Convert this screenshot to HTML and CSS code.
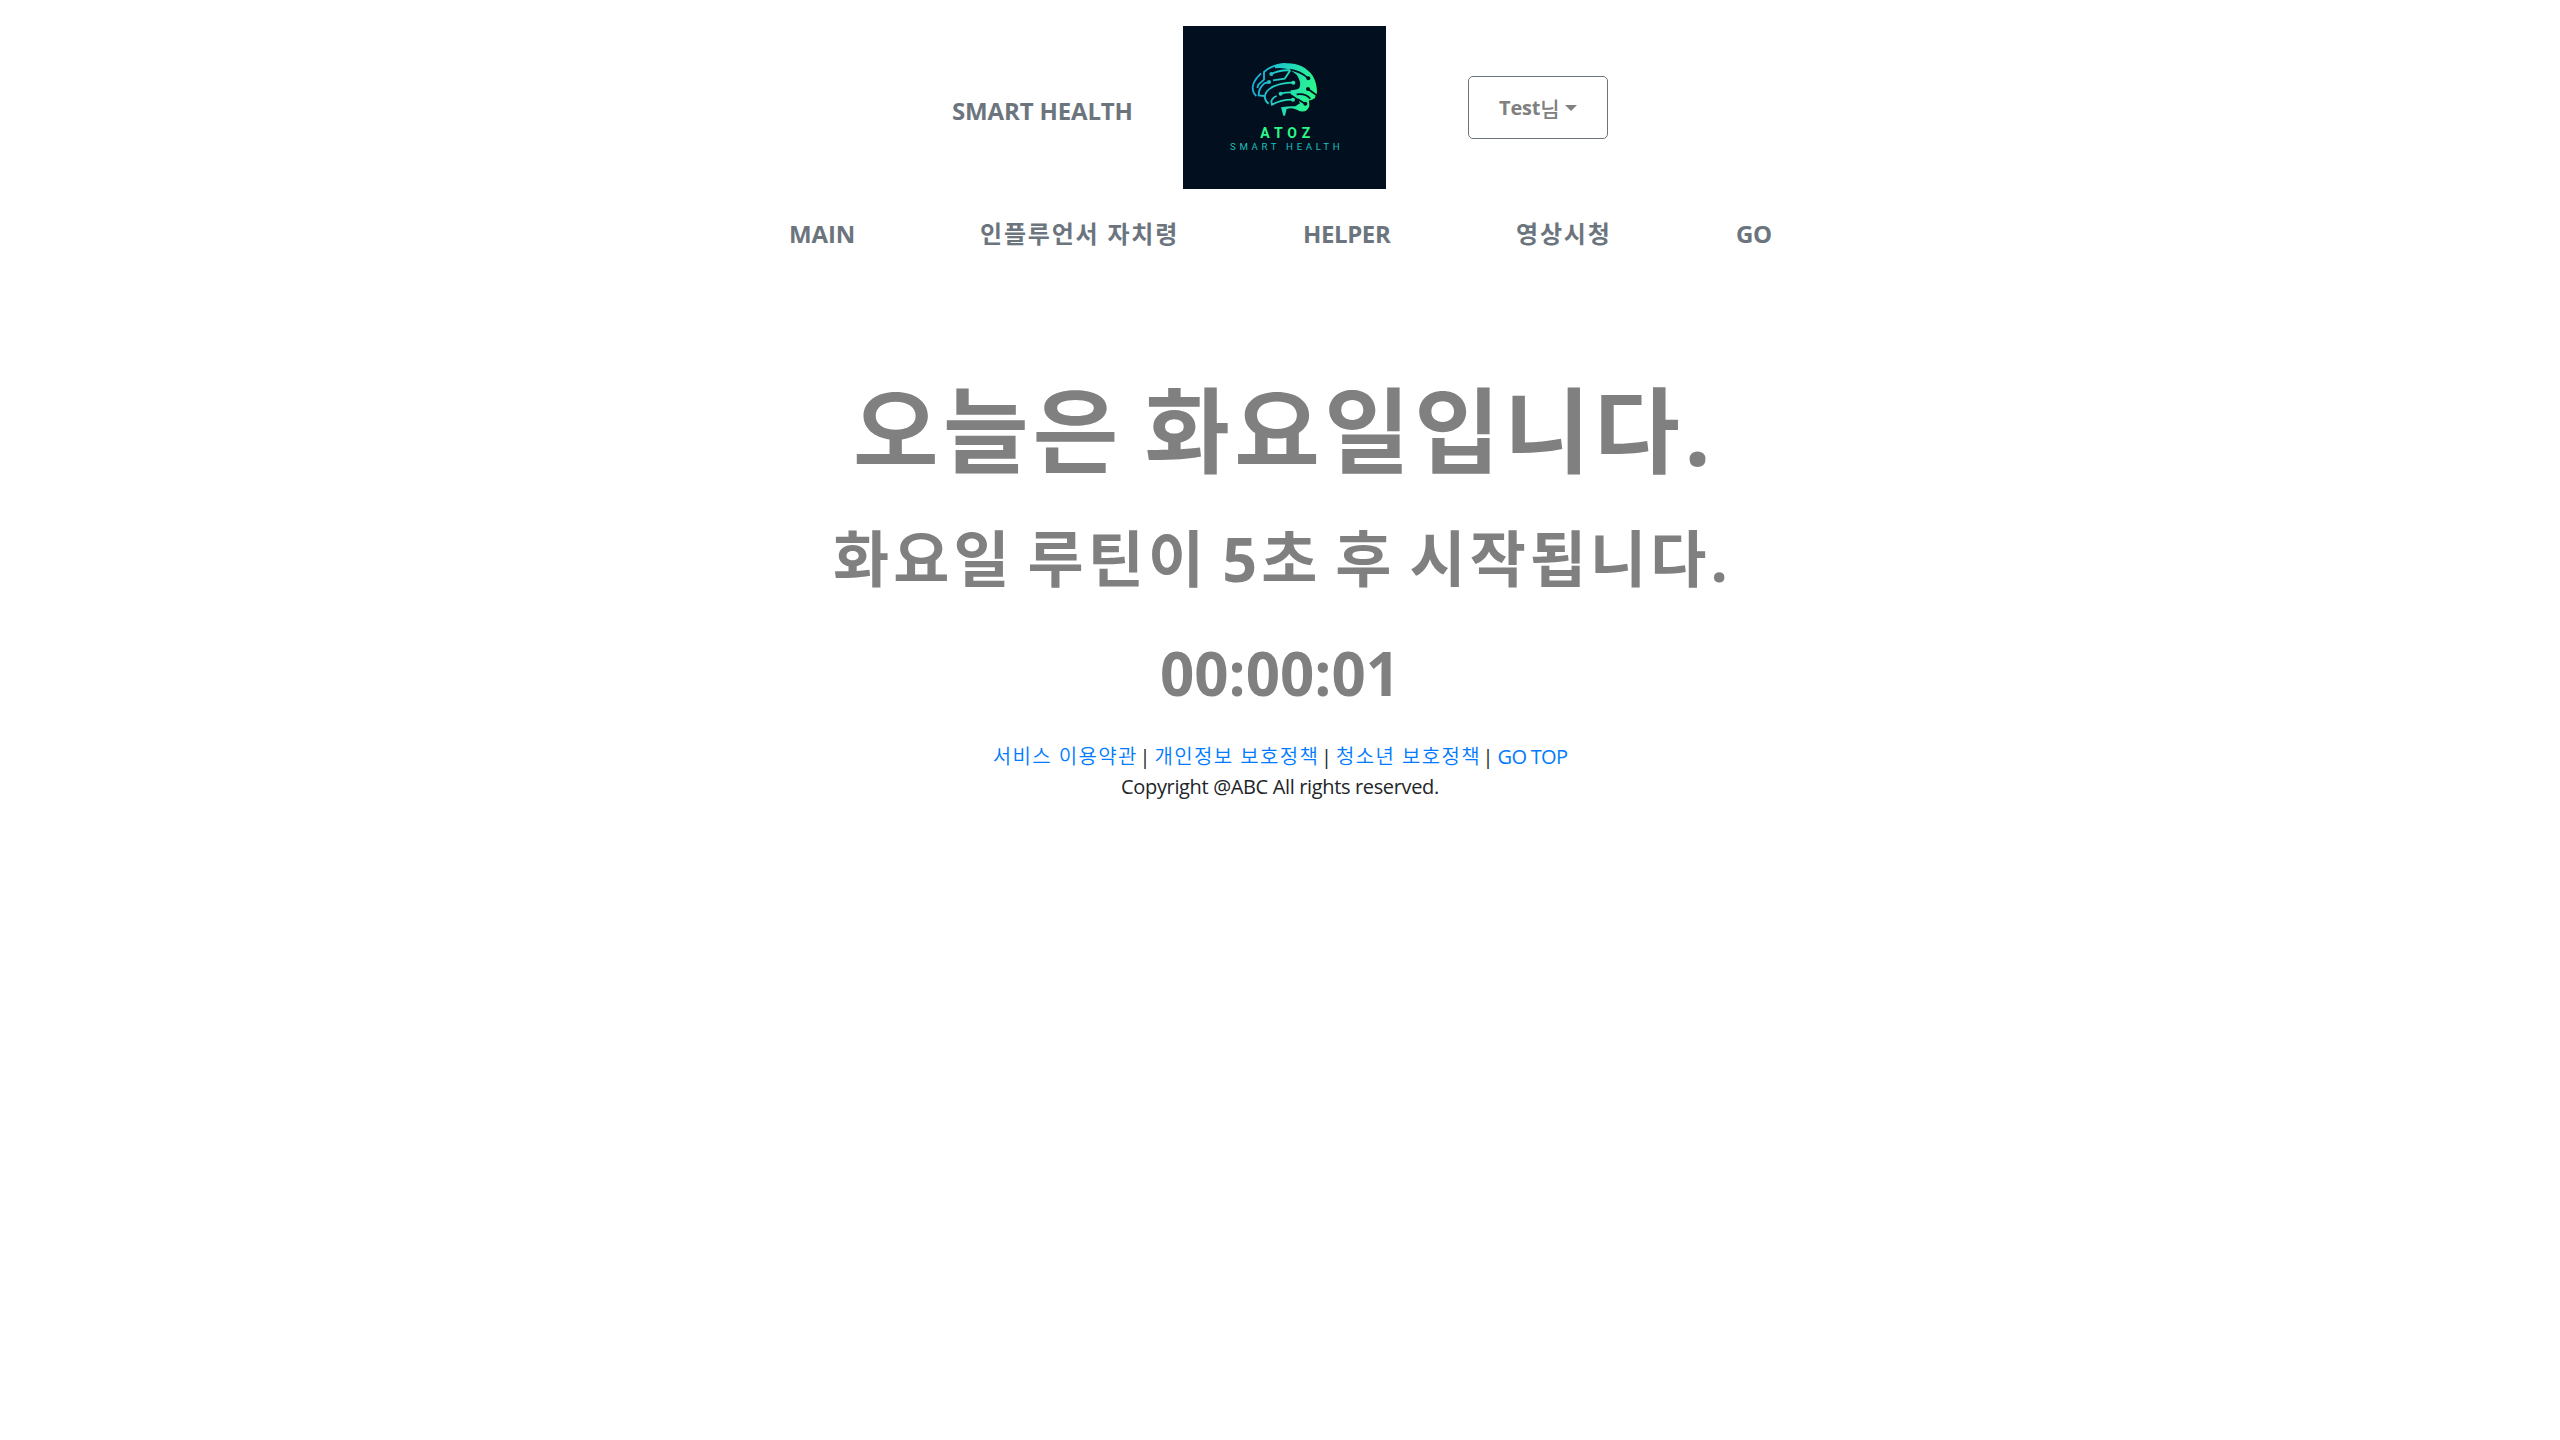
FILE: index.html
```html
<!DOCTYPE html>
<html lang="ko">
<head>
<meta charset="utf-8">
<title>Smart Health</title>
<link rel="stylesheet" href="styles.css">
</head>
<body>
<header class="header">
  <a class="brand"><span>SMART HEALTH</span></a>
  <svg class="logo" viewBox="9 18 609 489" role="img" aria-label="ATOZ Smart Health">
    <defs>
      <linearGradient id="brain" gradientUnits="userSpaceOnUse" x1="217" y1="180" x2="400" y2="230">
        <stop offset="0" stop-color="#1ba9df"/>
        <stop offset=".5" stop-color="#20d5bf"/>
        <stop offset="1" stop-color="#2bf889"/>
      </linearGradient>
    </defs>
    <rect x="9" y="18" width="609" height="489" fill="#020f1e"/>
    <path fill="url(#brain)" d="M285 136C330 121 374 133 397 166Q411 188 411 218L404 235Q397 241 386 242Q392 258 381 270Q368 279 352 270Q337 262 320 267L315 287H310L303 262Q326 258 346 259L360 250Q356 237 349 233L332 222V211Q351 210 358 204Q366 187 350 164L330 149Q308 142 285 145Z"/>
    <g fill="none" stroke="url(#brain)" stroke-width="5.5">
      <path d="M243 160Q213 188 219 212Q222 223 229 228"/>
      <path d="M232 204L235 194L252 179V156Q277 133 318 132"/>
      <path d="M267 186L253 190Q235 206 236 226L254 228"/>
      <path d="M340 188C300 188 251 202 255 235Q258 247 266 251"/>
      <path d="M302 221Q330 214 354 220"/>
      <path d="M340 239Q304 238 276 254L274 244Q277 233 290 228"/>
      <path d="M274 162Q299 149 331 151L314 176L279 181"/>
    </g>
    <g fill="none" stroke="#020f1e" stroke-width="5">
      <path d="M331 149Q361 154 385 175M384 207L409 225M350 223Q377 219 391 236M340 239L354 238L376 252"/>
    </g>
    <g fill="#020f1e"><circle cx="385" cy="175" r="6"/><circle cx="384" cy="207" r="6"/><circle cx="376" cy="251" r="6"/></g>
    <g fill="url(#brain)"><circle cx="274" cy="162" r="6"/><circle cx="267" cy="186" r="6"/><circle cx="340" cy="188" r="6"/><circle cx="302" cy="221" r="6"/><circle cx="339" cy="239" r="6"/></g>
    <text class="logo-name" x="241" y="353" textLength="150">ATOZ</text>
    <text class="logo-sub" x="150" y="390" textLength="329">SMART HEALTH</text>
  </svg>
  <button class="user"><span class="user-name">Test</span><span class="user-ko">님</span><i class="caret"></i></button>
</header>
<nav class="nav">
  <a class="w-main">MAIN</a>
  <a class="w-inf ko">인플루언서 자치령</a>
  <a class="w-help">HELPER</a>
  <a class="w-video ko">영상시청</a>
  <a class="w-go">GO</a>
</nav>
<main class="routine">
  <h1 class="today">오늘은 화요일입니다.</h1>
  <h2 class="notice">화요일 루틴이 5초 후 시작됩니다.</h2>
  <h2 class="timer">00:00:01</h2>
</main>
<footer class="footer">
  <div class="links"><a class="ko">서비스 이용약관</a><span>|</span><a class="ko">개인정보 보호정책</a><span>|</span><a class="ko">청소년 보호정책</a><span>|</span><a class="top">GO TOP</a></div>
  <p class="copy">Copyright @ABC All rights reserved.</p>
</footer>
</body>
</html>
```
FILE: styles.css
```css
* { box-sizing: border-box; }
body {
  margin: 0;
  background: #fff;
  color: #212529;
  font-family: "Open Sans", "Noto Sans CJK KR", sans-serif;
  font-size: 20px;
  white-space: nowrap;
}
h1, h2, p { margin: 0; }

.header {
  display: flex;
  align-items: flex-start;
  width: 656px;
  height: 189px;
  margin: 0 auto;
  padding-top: 26px;
}
.brand {
  width: 231px;
  padding-top: 69px;
  color: #6c757d;
  font-size: 24px;
  font-weight: 700;
  line-height: 32px;
  letter-spacing: -.15px;
}
.logo { flex: none; width: 203px; height: 163px; }
.logo-name { fill: #2bf889; font: 700 42px Roboto, sans-serif; }
.logo-sub { fill: #18c0bd; font: 400 29px Roboto, sans-serif; }
.user {
  display: flex;
  align-items: center;
  width: 140px;
  height: 63px;
  margin: 50px 0 0 82px;
  padding: 0 0 0 30px;
  border: 1px solid #6c757d;
  border-radius: 5px;
  background: #fff;
  color: gray;
  font: 700 20px "Open Sans", "Noto Sans CJK KR", sans-serif;
}
.user-name { width: 41px; letter-spacing: -.2px; }
.user-ko { width: 20px; font-size: 21px; font-weight: 500; }
.caret {
  margin: 0 0 0 5px;
  border: 6px solid transparent;
  border-top-color: gray;
  border-bottom: 0;
}

.nav {
  display: flex;
  gap: 126px;
  width: 984px;
  margin: 26px auto 0;
  padding-left: 1px;
  color: #6c757d;
  font-size: 24px;
  font-weight: 700;
  line-height: 38px;
}
.nav a { flex: none; letter-spacing: -.4px; }
.nav .ko { letter-spacing: 1.8px; }
.nav .w-main { width: 65px; letter-spacing: -.1px; }
.w-inf { width: 197px; }
.w-help { width: 87px; }
.w-video { width: 94px; }
.w-go { width: 37px; }

.routine {
  display: flex;
  flex-direction: column;
  align-items: center;
  padding-top: 112px;
  color: gray;
}
.today { height: 134px; padding-left: 8px; font-size: 93px; line-height: 130px; letter-spacing: 4.4px; word-spacing: -7px; }
.notice { height: 118px; padding-left: 5px; font-size: 61px; line-height: 120px; letter-spacing: 4.1px; word-spacing: -6px; }
.timer { height: 124px; font-size: 60px; line-height: 113px; }

.footer { display: flex; flex-direction: column; align-items: center; }
.links { display: flex; gap: 4px; line-height: 31px; }
.links a { color: #007bff; letter-spacing: -.7px; }
.links .ko { margin-right: -2.5px; font-weight: 350; letter-spacing: 1.4px; }
.copy { line-height: 30px; letter-spacing: -.35px; }
```
